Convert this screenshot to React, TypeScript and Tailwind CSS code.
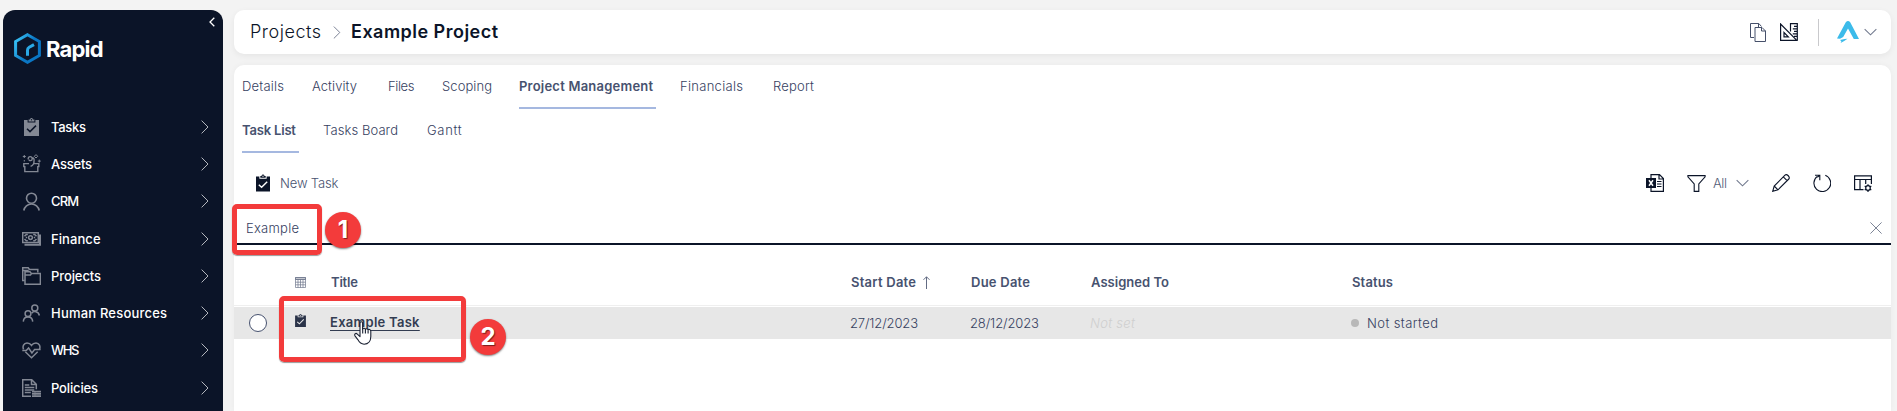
import React from "react";
import type { ReactNode } from "react";

type SvgProps = { className?: string; box: string; children: ReactNode; w?: number };

function Svg({ className = "", box, children, w = 1 }: SvgProps) {
  return (
    <svg viewBox={box} className={`shrink-0 ${className}`} fill="none" stroke="currentColor" strokeWidth={w}>
      {children}
    </svg>
  );
}

function ChevronRight({ className }: { className: string }) {
  return (
    <Svg box="0 0 8 14" className={className}>
      <path d="M0.6 0.6 7 7 0.6 13.4" />
    </Svg>
  );
}

function ChevronDown({ className }: { className: string }) {
  return (
    <Svg box="0 0 14 8" className={className} w={1.1}>
      <path d="M0.7 0.8 7 7 13.3 0.8" />
    </Svg>
  );
}

function Clipboard({ className, tick }: { className: string; tick: string }) {
  return (
    <Svg box="0 0 15 18" className={className} w={0}>
      <path
        fill="currentColor"
        fillRule="evenodd"
        d="M0 2h3.6v2.4h7.8V2H15v16H0zM4.6 1.6h1.3C6.1.6 6.7 0 7.5 0s1.4.6 1.6 1.6h1.3v1.9H4.6zM7.5 1a.7.7 0 1 0 0 1.4.7.7 0 0 0 0-1.4z"
      />
      <path d="M3 10.8 6 13.6 12 7.6" stroke={tick} strokeWidth="1.5" fill="none" />
    </Svg>
  );
}

const navItems: { label: string; tracking: string; icon: ReactNode }[] = [
  {
    label: "Tasks",
    tracking: "tracking-[-0.3px]",
    icon: <Clipboard className="h-[18px] w-[15px]" tick="#0b1428" />,
  },
  {
    label: "Assets",
    tracking: "tracking-[-0.2px]",
    icon: (
      <Svg box="0 0 19 19" className="size-[19px]" w={1.4}>
        <path d="M7 9.6H1.8v3h1v5h13v-5h1v-3h-5" />
        <path d="M8.6 12.4c2.6-1 3.6-3.4 3.4-5.8M6.3 5.2a2 2 0 1 1 3.8 0c0 1.6-3.2 2-3.2.4M10 3.6a2 2 0 0 1 1.8 3" />
        <path d="M2.3 1v3M.8 2.5h3M17.3 5.6v3M15.8 7.1h3M2.3 6v1.500" strokeWidth="1" />
        <path d="m14 .6 1.700 1.700L14 4l-1.700-1.700z" strokeWidth="1" />
      </Svg>
    ),
  },
  {
    label: "CRM",
    tracking: "tracking-[-0.9px]",
    icon: (
      <Svg box="0 0 19 19" className="size-[19px]" w={1.6}>
        <circle cx="9.5" cy="6.2" r="5" />
        <path d="M1.8 18.5a7.8 7.8 0 0 1 15.4 0" />
      </Svg>
    ),
  },
  {
    label: "Finance",
    tracking: "tracking-[0.07px]",
    icon: (
      <Svg box="0 0 19 14" className="h-[14px] w-[19px]" w={1.5}>
        <path d="M.7.8h15.6v9.6H.7z" />
        <path d="M18 2.5v10.3H2.5" strokeWidth="2" />
        <circle cx="8.5" cy="5.6" r="1.9" />
        <path d="M2.5 4.3 4.3 2.5h1.5M14.500 4.300l-1.800-1.800h-1.500M2.500 7l1.800 1.800h1.500M14.500 7l-1.800 1.800h-1.500M3.800 5.600h1.400M11.800 5.600h1.400" />
      </Svg>
    ),
  },
  {
    label: "Projects",
    tracking: "tracking-[-0.1px]",
    icon: (
      <Svg box="0 0 19 18" className="h-[18px] w-[19px]" w={1.5}>
        <path d="M2.8 13.5H.7V.8h5.500l1.300 1.700h8.300v3M.7 3.500h6" />
        <path d="M3 4.800h5l1.400 1.600h9v10.800H3zM3 8h5.500l1.200-1.600" />
      </Svg>
    ),
  },
  {
    label: "Human Resources",
    tracking: "tracking-[0.2px]",
    icon: (
      <Svg box="0 0 19 18" className="h-[18px] w-[19px]" w={1.5}>
        <circle cx="12.8" cy="4" r="3" />
        <path d="M9.600 9.200c1.700-2.200 6.800-2.700 7.800 2.300" />
        <circle cx="6" cy="9.700" r="2.900" />
        <path d="M1.300 17.600c.3-6.200 9.100-6.200 9.400 0" />
      </Svg>
    ),
  },
  {
    label: "WHS",
    tracking: "tracking-[-1.4px]",
    icon: (
      <Svg box="0 0 19 17" className="h-[17px] w-[19px]" w={1.5}>
        <path d="M1.600 7.400C.2 4.500 1.700.9 5 .9c2 0 3.600 1 4.500 2.400C10.400 1.900 12 .9 14 .9c3.300 0 4.800 3.600 3.400 6.500M3.300 9.700l6.200 6 6.200-6" />
        <path d="M.3 8.500h3.900l2.400-2.600 3.300 5 2.700-3.400h6" />
      </Svg>
    ),
  },
  {
    label: "Policies",
    tracking: "tracking-[-0.15px]",
    icon: (
      <Svg box="0 0 19 18" className="h-[18px] w-[19px]" w={1.5}>
        <path d="M9 17.300H.7V.7h9l4.600 4.600v5M9.500.7v4.800h4.800" />
        <path d="M2.800 6h4.500M2.800 8.500h9.500M2.800 11h9.500M2.800 13.500h6" />
        <path d="M10 12.600h9M10 14.900h9M10 17.200h9" strokeWidth="1.700" />
        <path d="M13 12v6" strokeWidth=".7" />
      </Svg>
    ),
  },
];

function Sidebar() {
  return (
    <aside className="flex w-[220px] shrink-0 flex-col rounded-t-[12px] bg-[#0b1428] text-white">
      <div className="flex h-[23px] justify-end pr-2 pt-[7px]">
        <Svg box="0 0 6 10" className="h-[10px] w-[6px]" w={1.3}>
          <path d="M5.300.7 1 5l4.300 4.300" />
        </Svg>
      </div>
      <div className="flex h-[31px] items-center pl-[11px]">
        <svg viewBox="0 0 27 31" className="h-[31px] w-[27px] shrink-0" fill="none">
          <defs>
            <linearGradient id="hex" x1="0" y1="0" x2="1" y2="0.6">
              <stop offset="0.1" stopColor="#35bdf2" />
              <stop offset="0.65" stopColor="#0a76c4" />
            </linearGradient>
          </defs>
          <path d="M13.500 1.700 25.400 8.500v14L13.500 29.300 1.600 22.500v-14z" stroke="url(#hex)" strokeWidth="3" />
          <path d="M13.500 22.800v-5.500c0-1.500.5-2.300 1.700-3l4.800-2.700" stroke="#2ba9e6" strokeWidth="3" />
        </svg>
        <span className="ml-[5px] text-[22px] font-bold leading-none tracking-[-0.8px]">Rapid</span>
      </div>
      <nav className="mt-[44px] flex flex-col">
        {navItems.map((item) => (
          <div key={item.label} className="flex h-[37.300px] items-center pl-[19px] pr-[14px]">
            <span className="flex w-[19px] justify-center text-[#838894]">{item.icon}</span>
            <span className={`ml-[10px] text-[13px] font-medium leading-5 ${item.tracking}`}>{item.label}</span>
            <ChevronRight className="ml-auto h-[14px] w-2 text-[#b4b7be]" />
          </div>
        ))}
      </nav>
    </aside>
  );
}

function Header() {
  return (
    <header className="flex h-11 shrink-0 items-center rounded-[10px] bg-white pl-4 pr-[14px] text-[18px] leading-6 text-[#0b1428] shadow-[0_2px_6px_rgba(0,0,0,0.06)]">
      <span className="w-[71px] whitespace-nowrap font-light tracking-[0.52px]">Projects</span>
      <ChevronRight className="ml-[12px] h-[13px] w-[8px] text-[#70788c]" />
      <span className="ml-[10px] font-semibold tracking-[0.48px]">Example Project</span>
      <div className="ml-auto flex items-center">
        <Svg box="0 0 16 19" className="h-[19px] w-4 text-[#46506a]">
          <path d="M4 14.500H.5V.5h8.300l2.700 3" />
          <path d="M5 4.500h7l3.500 3.500v10.500H5zM11.500 4.500V8h4M8.500.5v4" />
        </Svg>
        <Svg box="0 0 18 18" className="ml-[14px] size-[18px] text-[#0b1428]" w={1.2}>
          <path d="M.6 1v16.300h16.200zM4 9.500v4.300h4.300z" />
          <path d="M10.500 8.500V.7h6.800v16.500M14 3.300h3M12.800 5.800H17M14 8.300h3M12.800 10.800H17M14 13.300h3" />
        </Svg>
        <span className="ml-[20px] h-[27px] w-px bg-[#c9c9cc]" />
        <svg viewBox="0 0 22 22" className="ml-[18px] size-[22px]" fill="#3cbbea">
          <path d="M8.800 1.200Q11-1.200 13.200 1.200L22 18h-5.200L11 7.500 6.200 16 3 17.800 0 17.500z" />
          <path d="M3 19 7.500 18l3-.3-3.300 2.200-3.600 2 .8-1.700z" />
        </svg>
        <ChevronDown className="ml-[5px] h-[8px] w-[13px] text-[#6f778c]" />
      </div>
    </header>
  );
}

type Tab = { label: string; size: string; active?: boolean };

const mainTabs: Tab[] = [
  { label: "Details", size: "w-[46px] tracking-[0.2px]" },
  { label: "Activity", size: "w-[52px] tracking-[0.07px]" },
  { label: "Files", size: "w-[30px] tracking-[-0.4px]" },
  { label: "Scoping", size: "w-[53px] tracking-[0.08px]" },
  { label: "Project Management", size: "w-[137px] tracking-[0.22px]", active: true },
  { label: "Financials", size: "w-[69px] tracking-[0.3px]" },
  { label: "Report", size: "w-[44px] tracking-[0.22px]" },
];

const subTabs: Tab[] = [
  { label: "Task List", size: "w-[57px] tracking-[-0.18px]", active: true },
  { label: "Tasks Board", size: "w-[80px] tracking-[0.09px]" },
  { label: "Gantt", size: "w-[38px] tracking-[0.7px]" },
];

function Tabs({ tabs }: { tabs: Tab[] }) {
  return (
    <div className="flex h-11 shrink-0 gap-6 pl-2">
      {tabs.map((t) => (
        <div
          key={t.label}
          className={`flex items-center whitespace-nowrap border-b-2 ${t.size} ${
            t.active ? "border-[#a5b8e0] font-semibold text-[#47526f]" : "border-transparent"
          }`}
        >
          {t.label}
        </div>
      ))}
    </div>
  );
}

function Toolbar() {
  return (
    <div className="flex h-[60px] shrink-0 items-center pl-[22px] pr-[19px] text-[#0b1428]">
      <Clipboard className="h-[18px] w-[14px]" tick="#ffffff" />
      <span className="-mt-px ml-[10px] tracking-[-0.14px] text-[#47526f]">New Task</span>
      <div className="ml-auto flex items-center">
        <Svg box="0 0 18 18" className="size-[18px]" w={1.2}>
          <path d="M5 4V.6h8.500l3.900 4v12.800H5V14M13 .6V5h4.400" />
          <path d="M0 4h10v10H0z" fill="currentColor" stroke="none" />
          <path d="m3 6.300 4 5.400m0-5.400-4 5.400" stroke="#fff" strokeWidth="1.500" />
          <path d="M11 7.500h4.500M11 10h4.500M11 12.500h4.500" />
        </Svg>
        <Svg box="0 0 19 17" className="ml-[23px] h-[17px] w-[19px]" w={1.1}>
          <path d="M.9.6h17.200v1.200L11.800 9v7.400H7.200V9L.9 1.800z" />
        </Svg>
        <span className="-mt-px ml-[7px] w-[14px] whitespace-nowrap tracking-[-0.4px] text-[#535d78]">All</span>
        <ChevronDown className="ml-[9px] h-[8px] w-[13px] text-[#6f778c]" />
        <Svg box="0 0 18 18" className="ml-[23px] size-[18px]" w={1.1}>
          <path d="m.7 17.300 1.500-5.300L13 1.200c1.800-1.800 5.600 2 3.800 3.800L6 15.800zM2.200 12 6 15.800M11.300 2.900l3.800 3.800" />
        </Svg>
        <Svg box="0 0 18 18" className="ml-[23px] size-[18px]" w={1.1}>
          <path d="M12.300 1.300A8.400 8.400 0 1 1 4.300 2.400" />
          <path d="M2 1.300h4.800v4.900M6.800 1.300 4.300 3.200" />
        </Svg>
        <Svg box="0 0 18 17" className="ml-[23px] h-[17px] w-[18px]" w={1.2}>
          <path d="M9.500 14.700H.6V.9h16.800v8M.6 4.500h16.800M6 4.500v10.200M11.700 4.500V9" />
          <circle cx="14" cy="13" r="2.300" />
          <path d="M14 9.200v1.500M14 15.300v1.600M10.700 11.100l1.300.8M16 14.200l1.300.8M10.700 15l1.300-.8M16 11.900l1.300-.8" />
        </Svg>
      </div>
    </div>
  );
}

function SearchBar() {
  return (
    <div className="flex h-8 shrink-0 items-center justify-between border-b-2 border-[#0b1428] pl-3 pr-[9px]">
      <span className="-mt-px tracking-[0.24px]">Example</span>
      <Svg box="0 0 12 12" className="size-3 text-[#7d8496]">
        <path d="m.4.4 11.200 11.200M11.600.4.4 11.600" />
      </Svg>
    </div>
  );
}

const columns = "grid shrink-0 grid-cols-[61px_36px_520px_120px_120px_261px_1fr] items-center whitespace-nowrap";

function TaskTable() {
  return (
    <div className="flex flex-col">
      <div className={`${columns} h-[61px] border-b border-[#efefef] pt-[14px] font-semibold text-[#47526f]`}>
        <span />
        <Svg box="0 0 11 11" className="h-[11px] w-[11px] text-[#6f778c]" w={0.7}>
          <path d="M.5.5h10v2H.5z" fill="#c3c6ce" />
          <path d="M.5.5h10v10H.5zM.5 2.500h10M.5 5.200h10M.5 7.800h10M3 2.500v8M5.500 2.500v8M8 2.500v8" />
        </Svg>
        <span className="tracking-[-0.18px]">Title</span>
        <span className="flex items-center tracking-[0.24px]">
          Start Date
          <Svg box="0 0 7 13" className="ml-[7px] h-[13px] w-[7px] text-[#626b83]">
            <path d="M3.500 13V.8M.5 3.800l3-3 3 3" />
          </Svg>
        </span>
        <span className="tracking-[0.24px]">Due Date</span>
        <span className="tracking-[0.03px]">Assigned To</span>
        <span className="tracking-[0.15px]">Status</span>
      </div>
      <div className={`${columns} mt-px h-8 bg-[#e7e7e7]`}>
        <span className="ml-[15px] size-[18px] rounded-full border border-[#47526f] bg-white" />
        <Clipboard className="-mt-[5px] h-[13px] w-[11px] text-[#2a3348]" tick="#e7e7e7" />
        <span className="-ml-px -mt-[3px] font-semibold tracking-[0.27px] text-[#333d52] underline decoration-1 underline-offset-[3px]">
          Example Task
        </span>
        <span className="-ml-px -mt-px tracking-[-0.14px]">27/12/2023</span>
        <span className="-ml-px -mt-px tracking-[-0.11px]">28/12/2023</span>
        <span className="-ml-px -mt-px italic tracking-[0.29px] text-[#cfcfcf]">Not set</span>
        <span className="-mt-px flex items-center tracking-[0.41px]">
          <span className="-ml-px mr-2 size-2 rounded-full bg-[#b8b8b8]" />
          Not started
        </span>
      </div>
    </div>
  );
}

function Callout({ box, badge, value }: { box: string; badge: string; value: string }) {
  return (
    <>
      <div className={`absolute rounded-[5px] border-[5px] border-[#f33b3b] shadow-[0_1px_1px_rgba(0,0,0,0.4)] ${box}`} />
      <div
        className={`absolute flex size-9 items-center justify-center rounded-full bg-[#f33b3b] pb-px text-[24px] font-bold text-white shadow-[0_1px_2px_rgba(0,0,0,0.5)] [text-shadow:1px_1px_1px_rgba(0,0,0,0.5)] ${badge}`}
      >
        {value}
      </div>
    </>
  );
}

function HandCursor() {
  return (
    <svg viewBox="0 0 18 24" className="absolute left-[354px] top-[321px] h-6 w-[18px]" fill="#fff" stroke="#1b2233" strokeWidth="1.1" strokeLinejoin="round">
      <path d="M6 13.800V2.300C6 .3 8.600.3 8.600 2.300v6c.2-1.500 2.700-1.400 2.800.3.200-1.300 2.500-1.100 2.700.5.400-1.200 2.600-.8 2.700 1v5.500c0 4-2.200 7.600-6.700 7.600-3.700 0-5-2.200-6.300-4.600L1 14.800c-1-2 .9-3.100 2.300-1.700L6 15.700z" />
      <path d="M8.700 8v4.500M11.400 8.800v3.700M14.100 9.600v3" />
    </svg>
  );
}

export default function App() {
  return (
    <div className="relative flex h-[411px] w-full gap-[11px] overflow-hidden bg-[#f3f3f3] pl-[3px] pr-[6px] pt-[10px] font-['Inter','Liberation_Sans',sans-serif]">
      <Sidebar />
      <main className="flex min-w-0 flex-1 flex-col gap-[11px]">
        <Header />
        <section className="flex flex-1 flex-col rounded-t-[10px] bg-white text-[13px] font-light leading-5 text-[#36415f] shadow-[0_0_6px_rgba(0,0,0,0.04)]">
          <Tabs tabs={mainTabs} />
          <Tabs tabs={subTabs} />
          <Toolbar />
          <SearchBar />
          <TaskTable />
        </section>
      </main>
      <Callout box="left-[232px] top-[204px] h-[51px] w-[90px]" badge="left-[325px] top-[212px]" value="1" />
      <Callout box="left-[279px] top-[296px] h-[66px] w-[187px]" badge="left-[470px] top-[319px]" value="2" />
      <HandCursor />
    </div>
  );
}
